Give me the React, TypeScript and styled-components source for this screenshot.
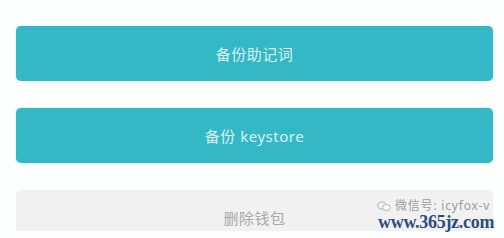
import React from 'react';
import styled, { createGlobalStyle } from 'styled-components';

const GlobalStyle = createGlobalStyle`
  html, body {
    margin: 0;
    padding: 0;
    background: #fdfefe;
    font-family: "Noto Sans", "Noto Sans CJK SC", sans-serif;
  }
`;

const Page = styled.div`
  position: relative;
  width: 504px;
  height: 238px;
  overflow: hidden;
  box-sizing: border-box;
  padding: 26px 11px 0 16px;
  display: flex;
  flex-direction: column;
  gap: 27px;
`;

const Clip = styled.div<{ $h?: number }>`
  height: ${(p) => (p.$h ? `${p.$h}px` : 'auto')};
  overflow: hidden;
  flex-shrink: 0;
`;

const Button = styled.div<{ $muted?: boolean }>`
  height: 55px;
  border-radius: 5px;
  display: flex;
  align-items: center;
  justify-content: center;
  font-size: 15px;
  letter-spacing: 0.5px;
  background: ${(p) => (p.$muted ? '#f1f1f2' : '#35b8c6')};
  color: ${(p) => (p.$muted ? '#a9a9ad' : '#d9f1f4')};
  box-shadow: ${(p) => (p.$muted ? 'none' : '0 0 2px rgba(53, 184, 198, 0.45)')};
`;

const Watermark = styled.div`
  position: absolute;
  right: 9px;
  bottom: 7px;
  width: 118px;
  height: 32px;
`;

const WeChatLine = styled.div`
  position: absolute;
  top: 0;
  left: 0;
  display: flex;
  align-items: center;
  gap: 4px;
  font-size: 12px;
  letter-spacing: 0.8px;
  color: #9a9ca3;
  white-space: nowrap;
  line-height: 14px;
`;

const Site = styled.div`
  position: absolute;
  left: 1px;
  bottom: 0;
  font-family: "Liberation Serif", "DejaVu Serif", serif;
  font-size: 18px;
  font-weight: bold;
  color: #2c4c7f;
  letter-spacing: -0.3px;
  white-space: nowrap;
  line-height: 1;
`;

const WeChatIcon = () => (
  <svg width="14" height="11" viewBox="0 0 14 11" fill="none" stroke="#b0b2b8" strokeWidth="1">
    <ellipse cx="5" cy="4.5" rx="4.3" ry="3.6" />
    <ellipse cx="9.5" cy="6.5" rx="3.8" ry="3" fill="#fdfefe" />
  </svg>
);

const App: React.FunctionComponent = () => {
  return (
    <>
      <GlobalStyle />
      <Page>
        <Button>备份助记词</Button>
        <Button>备份 keystore</Button>
        <Clip $h={41}>
          <Button $muted>删除钱包</Button>
        </Clip>
        <Watermark>
          <WeChatLine>
            <WeChatIcon />
            <span>微信号: icyfox-v</span>
          </WeChatLine>
          <Site>www.365jz.com</Site>
        </Watermark>
      </Page>
    </>
  );
};

export default App;
